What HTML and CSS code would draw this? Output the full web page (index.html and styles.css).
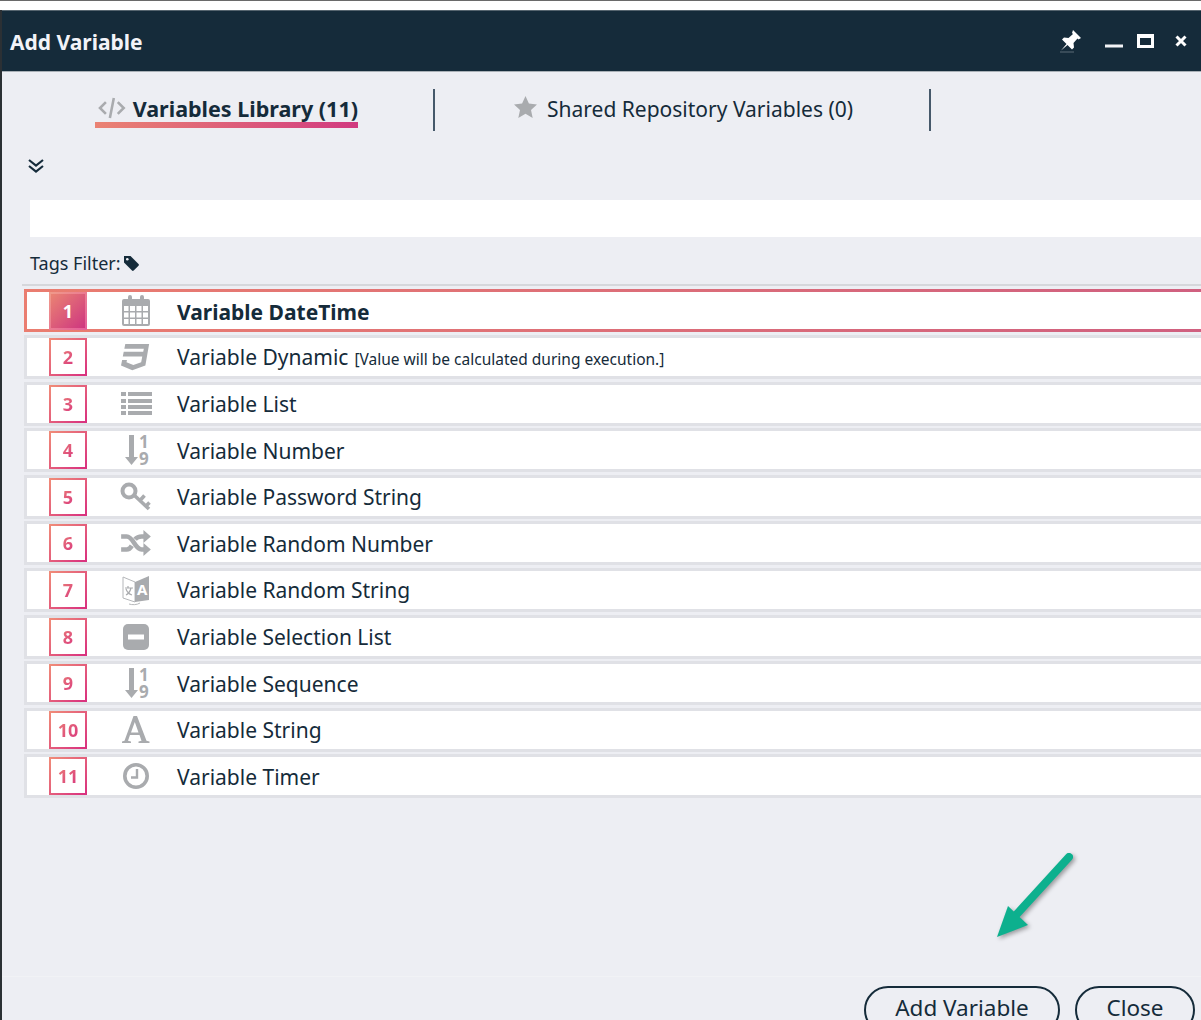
FILE: index.html
```html
<!DOCTYPE html>
<html lang="en">

<head>
  <meta charset="UTF-8">
  <title>Add Variable</title>
  <link rel="stylesheet" href="styles.css">
</head>

<body>
  <div class="top-strip"></div>
  <div class="dialog">
    <div class="title-bar">
      <h1>Add Variable</h1>
      <div class="win-buttons">
        <svg class="win-pin" width="24" height="24" viewBox="0 0 24 24"><path d="M15 1l8 8-2.500 1.500-1-1-4 4.500.5 4.500-2 2-4.500-4.500-6.500 5.500 5.500-6.500-4.500-4.500 2-2 4.500.5 4.500-4-1-1z" fill="#fff"/><path d="M2 23h14" stroke="#fff" stroke-width="1" opacity="0.3"/></svg>
        <svg class="win-min" width="18" height="4" viewBox="0 0 18 4"><rect width="18" height="3" y="0.5" fill="#f2f3f6"/></svg>
        <svg class="win-max" width="17" height="14" viewBox="0 0 17 14"><path d="M0 0h17v14H0zM3 4v7h11V4z" fill="#fff" fill-rule="evenodd"/></svg>
        <svg class="win-close" width="12" height="12" viewBox="0 0 12 12"><path d="M1.5 1.5l9 9M10.500 1.5l-9 9" stroke="#fff" stroke-width="3"/></svg>
      </div>
    </div>

    <div class="tabs">
      <div class="tab tab-active">
        <svg width="28" height="22" viewBox="0 0 28 22"><path d="M8 5l-6 6 6 6M20 5l6 6-6 6M16 1l-4 20" fill="none" stroke="#a9abae" stroke-width="2.6"/></svg>
        <span>Variables Library (11)</span>
      </div>
      <div class="tab-sep"></div>
      <div class="tab tab-shared">
        <svg width="25" height="24" viewBox="0 0 25 24"><path d="M12.500 1l3.400 7.500 8.100.9-6 5.500 1.700 8-7.200-4.100-7.200 4.100 1.700-8-6-5.500 8.100-.9z" fill="#a9abae"/></svg>
        <span>Shared Repository Variables (0)</span>
      </div>
      <div class="tab-sep"></div>
    </div>

    <div class="expand">
      <svg width="16" height="16" viewBox="0 0 16 16"><path d="M1 2l7 5.500L15 2M1 8l7 5.500L15 8" fill="none" stroke="#152b3a" stroke-width="2.2"/></svg>
    </div>

    <div class="search-box"></div>

    <div class="tags-filter">
      <span>Tags Filter:</span>
      <svg width="16" height="16" viewBox="0 0 16 16"><path d="M1 1h6.500L15.500 9a1.200 1.200 0 0 1 0 1.700l-4.800 4.800a1.200 1.200 0 0 1-1.700 0L1 7.500z" fill="#152b3a"/><circle cx="4.300" cy="4.300" r="1.300" fill="#edeef3"/></svg>
    </div>

    <div class="var-list">
      <div class="var-row selected">
        <div class="num"><span>1</span></div>
        <svg class="icon" width="30" height="32" viewBox="0 0 30 32"><path fill-rule="evenodd" fill="#a9abae" d="M3 4h4V2a2 2 0 0 1 4 0v2h8V2a2 2 0 0 1 4 0v2h4a2 2 0 0 1 2 2v23a2 2 0 0 1-2 2H3a2 2 0 0 1-2-2V6a2 2 0 0 1 2-2zM3 11v5h4.500v-5zM9 11v5h5v-5zM15.500 11v5h5v-5zM22 11v5h5v-5zM3 17.500v5h4.500v-5zM9 17.500v5h5v-5zM15.500 17.500v5h5v-5zM22 17.500v5h5v-5zM3 24v5h4.500v-5zM9 24v5h5v-5zM15.500 24v5h5v-5zM22 24v5h5v-5z"/></svg>
        <span class="var-name">Variable DateTime</span>
      </div>
      <div class="var-row">
        <div class="num"><span>2</span></div>
        <svg class="icon" width="30" height="30" viewBox="0 0 512 512"><path fill="#a9abae" d="M480 32l-64 368-223.300 80L0 400l19.600-94.800h82.100l-8 40.600 116.700 44.600 133.900-44.400 18.700-97.100H30.500l16-82h332.800l10.500-52.700H57.100l16.100-82z"/></svg>
        <span class="var-name">Variable Dynamic</span><span class="var-note">[Value will be calculated during execution.]</span>
      </div>
      <div class="var-row">
        <div class="num"><span>3</span></div>
        <svg class="icon" width="30" height="30" viewBox="0 0 30 30"><path fill="#a9abae" d="M0 3h5v4H0zM7 3h24v4H7zM0 10h5v4H0zM7 10h24v4H7zM0 16h5v4H0zM7 16h24v4H7zM0 22h5v4H0zM7 22h24v4H7z"/></svg>
        <span class="var-name">Variable List</span>
      </div>
      <div class="var-row">
        <div class="num"><span>4</span></div>
        <svg class="icon" width="30" height="32" viewBox="0 0 30 32"><path fill="#a9abae" d="M8 1h5v22h4l-6.500 8L4 23h4z"/><text x="18" y="14" class="sort-digit">1</text><text x="18" y="31" class="sort-digit">9</text></svg>
        <span class="var-name">Variable Number</span>
      </div>
      <div class="var-row">
        <div class="num"><span>5</span></div>
        <svg class="icon" width="30" height="30" viewBox="0 0 30 30"><circle cx="8" cy="9" r="6.500" fill="none" stroke="#a9abae" stroke-width="4"/><path d="M13 13l15 14M19 18.500l4.500-5M25 24l3.500-3.500" fill="none" stroke="#a9abae" stroke-width="3.6"/></svg>
        <span class="var-name">Variable Password String</span>
      </div>
      <div class="var-row">
        <div class="num"><span>6</span></div>
        <svg class="icon" width="30" height="26" viewBox="0 0 32 28"><path fill="none" stroke="#a9abae" stroke-width="5" d="M0 7h6c7 0 9 14 16 14h4M0 21h6c2.500 0 4-1.500 5.500-4M15 10c1.500-1.700 3.500-3 7-3h4"/><path fill="#a9abae" d="M24 0l8 7-8 7zM24 14l8 7-8 7z"/></svg>
        <span class="var-name">Variable Random Number</span>
      </div>
      <div class="var-row">
        <div class="num"><span>7</span></div>
        <svg class="icon" width="30" height="32" viewBox="0 0 30 32"><path fill="none" stroke="#b5b7ba" stroke-width="1" d="M2 3l12 5v20L2 24zM8 30c3 1 8 1 11-1"/><path fill="#a9abae" d="M14 8L28 2v24l-14 2z"/><path d="M4 14h8M7 12v2M10 14c-1 4-3 6-5 7M5 15c1 3 3 5 6 6" fill="none" stroke="#a9abae" stroke-width="1.2"/><text x="16" y="21" class="lang-a">A</text></svg>
        <span class="var-name">Variable Random String</span>
      </div>
      <div class="var-row">
        <div class="num"><span>8</span></div>
        <svg class="icon" width="30" height="30" viewBox="0 0 30 30"><rect x="2" y="2" width="26" height="26" rx="5" fill="#a9abae"/><rect x="7" y="12.500" width="16" height="5" fill="#fff"/></svg>
        <span class="var-name">Variable Selection List</span>
      </div>
      <div class="var-row">
        <div class="num"><span>9</span></div>
        <svg class="icon" width="30" height="32" viewBox="0 0 30 32"><path fill="#a9abae" d="M8 1h5v22h4l-6.500 8L4 23h4z"/><text x="18" y="14" class="sort-digit">1</text><text x="18" y="31" class="sort-digit">9</text></svg>
        <span class="var-name">Variable Sequence</span>
      </div>
      <div class="var-row">
        <div class="num"><span>10</span></div>
        <svg class="icon" width="30" height="30" viewBox="0 0 30 30"><path fill="#a9abae" fill-rule="evenodd" d="M1 28v-1.500l2.500-.7L12.500 1h3.500l9.500 24.800 3 .7V28H17.500v-1.500l3-.7-2-5.800H9l-2 5.800 3 .7V28zM10 17.500h7.500L13.800 7z"/></svg>
        <span class="var-name">Variable String</span>
      </div>
      <div class="var-row">
        <div class="num"><span>11</span></div>
        <svg class="icon" width="30" height="30" viewBox="0 0 30 30"><circle cx="15" cy="15" r="11.200" fill="none" stroke="#a9abae" stroke-width="3.6"/><path d="M16 8v8.500H10" fill="none" stroke="#a9abae" stroke-width="2.4"/></svg>
        <span class="var-name">Variable Timer</span>
      </div>
    </div>

    <div class="footer">
      <button class="btn btn-add">Add Variable</button>
      <button class="btn btn-close">Close</button>
    </div>
  </div>

  <svg class="arrow" width="100" height="100" viewBox="0 0 100 100">
    <path d="M73 7L20 65" stroke="#0db08e" stroke-width="8" stroke-linecap="round"/>
    <path d="M12 56L1 87 32 75z" fill="#0db08e"/>
  </svg>
</body>

</html>
```

FILE: styles.css
```css
* {
  box-sizing: border-box;
  margin: 0;
  padding: 0;
  font-family: "Noto Sans", "Open Sans", sans-serif;
}

html, body {
  height: 1020px;
  overflow: hidden;
  background-color: #fff;
}

body {
  position: relative;
  color: #152b3a;
}

.top-strip {
  height: 10px;
  border-top: 1px solid #6a6a6a;
}

.dialog {
  width: 1240px;
  height: 1010px;
  border-left: 2px solid #2b3034;
  background-color: #edeef3;
}

.title-bar {
  display: flex;
  align-items: center;
  justify-content: space-between;
  height: 62px;
  border-top: 1px solid #56656f;
  border-bottom: 1px solid #a9b0b6;
  background-color: #152b3a;
  padding-left: 8px;
}

h1 {
  padding-top: 2px;
  font-size: 21px;
  font-weight: 700;
  color: #f2f3f8;
}

.win-buttons {
  display: flex;
  align-items: center;
  width: 179px;
  height: 100%;
}

.win-pin {
  margin-left: -3px;
}

.win-min {
  margin: 10px 0 0 23px;
}

.win-max {
  margin: 0 0 0 14px;
}

.win-close {
  margin: 0 0 0 21px;
}

.tabs {
  display: flex;
  align-items: center;
  height: 59px;
  padding-top: 17px;
}

.tab {
  display: flex;
  align-items: center;
  font-size: 21px;
  white-space: nowrap;
}

.tab-active {
  margin: 0 0 3px 93px;
  width: 263px;
  height: 39px;
  font-size: 21.5px;
  font-weight: 700;
  padding: 5px 0 0 3px;
  border-bottom: 6px solid;
  border-image: linear-gradient(90deg, #ea8373, #d13a80) 1;
}

.tab-active svg {
  margin-right: 7px;
}

.tab-shared {
  margin: 0 0 2px 78px;
  width: 416px;
}

.tab-shared svg {
  margin-right: 9px;
  margin-top: -5px;
}

.tab-sep {
  width: 2px;
  height: 42px;
  margin-left: 75px;
  background-color: #46596a;
}

.tab-shared + .tab-sep {
  margin: 0;
}

.expand {
  height: 69px;
  padding: 26px 0 0 26px;
}

.search-box {
  height: 37px;
  margin-left: 28px;
  background-color: #fff;
}

.tags-filter {
  display: flex;
  align-items: center;
  gap: 2px;
  height: 49px;
  margin-left: 20px;
  padding: 4px 0 0 8px;
  border-bottom: 2px solid #d6d7db;
  font-size: 18px;
}

.var-list {
  display: flex;
  flex-direction: column;
  gap: 2.6px;
  margin: 3.4px 0 0 22px;
  height: 686.6px;
}

.var-row {
  display: flex;
  align-items: center;
  height: 44px;
  border: 3px solid #e0e1e6;
  background-color: #fff;
  font-size: 21px;
  padding-left: 22px;
  white-space: nowrap;
}

.var-row.selected {
  height: 43px;
  border-image: linear-gradient(90deg, #ea7d70, #cf5f80) 1;
  font-weight: 700;
}

.var-name {
  padding-top: 1px;
}

.selected .var-name {
  padding-top: 2px;
}

.num {
  display: flex;
  align-items: center;
  justify-content: center;
  width: 38px;
  height: 38px;
  flex-shrink: 0;
  border: 2px solid;
  border-image: linear-gradient(135deg, #f08c78, #d9307f) 1;
  font-size: 18px;
  font-weight: 700;
}

.num span {
  background: linear-gradient(135deg, #ea7f76, #d9347f);
  -webkit-background-clip: text;
  background-clip: text;
  color: transparent;
}

.selected .num {
  background: linear-gradient(135deg, #ea8373, #ce3680);
  border-image: linear-gradient(135deg, #f09a8a, #e55e9a) 1;
}

.selected .num span {
  background: none;
  color: #fff;
}

.icon {
  flex-shrink: 0;
  overflow: visible;
  margin: 0 26px 0 34px;
}

.var-note {
  margin: 4px 0 0 6px;
  font-size: 15.5px;
}

.sort-digit {
  font-size: 17px;
  font-weight: 700;
  fill: #a9abae;
}

.lang-a {
  font-size: 15px;
  font-weight: 700;
  fill: #fff;
}

.footer {
  display: flex;
  gap: 15px;
  height: 60px;
  padding: 9px 0 0 862px;
  border-top: 1px solid #f1f2f5;
}

.btn {
  height: 48px;
  padding-bottom: 4px;
  border: 2px solid #152b3a;
  border-radius: 24px;
  background: transparent;
  color: #152b3a;
  font-size: 22.5px;
}

.btn-add {
  width: 196px;
}

.btn-close {
  width: 120px;
}

/* annotation drawn over the dialog */
.arrow {
  position: absolute;
  left: 996px;
  top: 850px;
  filter: drop-shadow(2px 2px 2px rgba(0, 0, 0, 0.35));
}
```
